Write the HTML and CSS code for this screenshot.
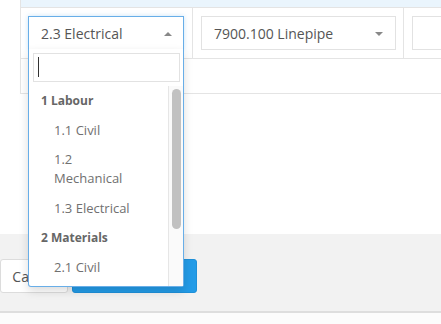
FILE: index.html
```html
<!DOCTYPE html>
<html lang="en">
<head>
    <meta charset="UTF-8">
    <meta name="viewport" content="width=device-width, initial-scale=1.0">
    <title>Cost lines</title>
    <link rel="stylesheet" href="styles.css">
</head>
<body>
    <div class="page">
        <div class="grid">
            <div class="grid-head"></div>
            <div class="grid-row">
                <div class="cell cell-account">
                    <div class="picker is-open">
                        <div class="picker-box">
                            <span class="picker-value">2.3 Electrical</span>
                            <span class="picker-arrow"></span>
                        </div>
                        <div class="picker-drop">
                            <div class="picker-search">
                                <div class="search-field"><span class="caret"></span></div>
                            </div>
                            <div class="results-wrap">
                                <ul class="picker-results">
                                    <li class="group">1 Labour</li>
                                    <li class="option">1.1 Civil</li>
                                    <li class="option">1.2 Mechanical</li>
                                    <li class="option">1.3 Electrical</li>
                                    <li class="group">2 Materials</li>
                                    <li class="option">2.1 Civil</li>
                                    <li class="option">2.2 Mechanical</li>
                                    <li class="option">2.3 Electrical</li>
                                </ul>
                                <div class="scroll-track"><div class="scroll-thumb"></div></div>
                            </div>
                        </div>
                    </div>
                </div>
                <div class="cell cell-item">
                    <div class="picker">
                        <div class="picker-box">
                            <span class="picker-value">7900.100 Linepipe</span>
                            <span class="picker-arrow down"></span>
                        </div>
                    </div>
                </div>
                <div class="cell cell-rest">
                    <div class="picker">
                        <div class="picker-box"></div>
                    </div>
                </div>
            </div>
            <div class="grid-row empty"></div>
        </div>

        <div class="actions">
            <button class="btn btn-cancel">Cancel</button>
            <button class="btn btn-save">Save</button>
        </div>
    </div>
</body>
</html>
```

FILE: styles.css
```css
* {
    margin: 0;
    padding: 0;
    box-sizing: border-box;
}

body {
    font-family: 'Open Sans', 'Noto Sans', sans-serif;
    background-color: #fcfcfc;
    color: #555;
}

.page {
    background-color: #fff;
}

/* Table */
.grid {
    margin-left: 20px;
    border-left: 1px solid #e4e4e4;
}

.grid-head {
    height: 8px;
    background-color: #eaf5fd;
    border-bottom: 1px solid #e4e4e4;
}

.grid-row {
    display: flex;
    border-bottom: 1px solid #e4e4e4;
}

.grid-row.empty {
    height: 35px;
}

.cell {
    padding: 8px 8px 8px 8px;
    border-right: 1px solid #e4e4e4;
}

.cell-account {
    width: 172px;
    padding-left: 7px;
}

.cell-item {
    width: 211px;
    padding-right: 7px;
}

.cell-rest {
    flex: 1;
    border-right: none;
    padding-right: 0;
}

/* Select */
.picker {
    position: relative;
}

.picker-box {
    display: flex;
    align-items: center;
    height: 34px;
    padding: 0 11px 0 12px;
    border: 1px solid #e2e2e2;
    background-color: #fff;
    font-size: 14px;
}

.cell-rest .picker-box {
    border-right: none;
}

.picker-value {
    flex: 1;
    white-space: nowrap;
    color: #555;
}

.picker-arrow {
    width: 0;
    height: 0;
    border-left: 4px solid transparent;
    border-right: 4px solid transparent;
    border-bottom: 4px solid #888;
    margin-top: 1px;
}

.picker-arrow.down {
    border-bottom: none;
    border-top: 4px solid #888;
    margin-right: 1px;
}

.is-open .picker-box {
    border-color: #68aee8;
    border-bottom-color: #fff;
    box-shadow: 0 0 5px rgba(104, 174, 232, 0.35);
}

.picker-drop {
    position: absolute;
    top: 33px;
    left: 0;
    right: 0;
    z-index: 10;
    background-color: #fff;
    border: 1px solid #68aee8;
    border-top: none;
    border-radius: 0 0 3px 3px;
    box-shadow: 0 4px 10px rgba(0, 0, 0, 0.14);
}

.picker-search {
    padding: 4px 3px 4px 4px;
}

.search-field {
    height: 29px;
    border: 1px solid #e2e2e2;
    padding: 3px 4px;
}

.caret {
    display: block;
    width: 1px;
    height: 20px;
    background-color: #333;
}

.results-wrap {
    position: relative;
}

.picker-results {
    list-style: none;
    max-height: 200px;
    overflow: hidden;
    padding-right: 15px;
    font-size: 13px;
    line-height: 19px;
    color: #707070;
}

/* drawn scrollbar */
.scroll-track {
    position: absolute;
    top: 0;
    right: 0;
    bottom: 0;
    width: 15px;
    background-color: #fafafa;
    border-left: 1px solid #e6e6e6;
}

.scroll-thumb {
    margin: 3px 0 0 3px;
    width: 9px;
    height: 140px;
    border-radius: 5px;
    background-color: #c1c1c1;
}

.group {
    padding: 5px 6px 5.5px 12px;
    font-size: 12px;
    font-weight: bold;
    color: #666;
}

.option {
    padding: 5px 31px 5.5px 25px;
}

/* Footer buttons */
.actions {
    display: flex;
    gap: 4px;
    margin-top: 140px;
    padding: 25px 0 18px;
    background-color: #f2f2f2;
    border-bottom: 2px solid #dedede;
}

.btn {
    height: 34px;
    border-radius: 3px;
    font-family: inherit;
    font-size: 14px;
    cursor: pointer;
}

.btn-cancel {
    width: 68px;
    background-color: #fff;
    border: 1px solid #dcdcdc;
    color: #555;
}

.btn-save {
    width: 125px;
    background-color: #239be7;
    border: 1px solid #1f90d8;
    color: #fff;
}
```
